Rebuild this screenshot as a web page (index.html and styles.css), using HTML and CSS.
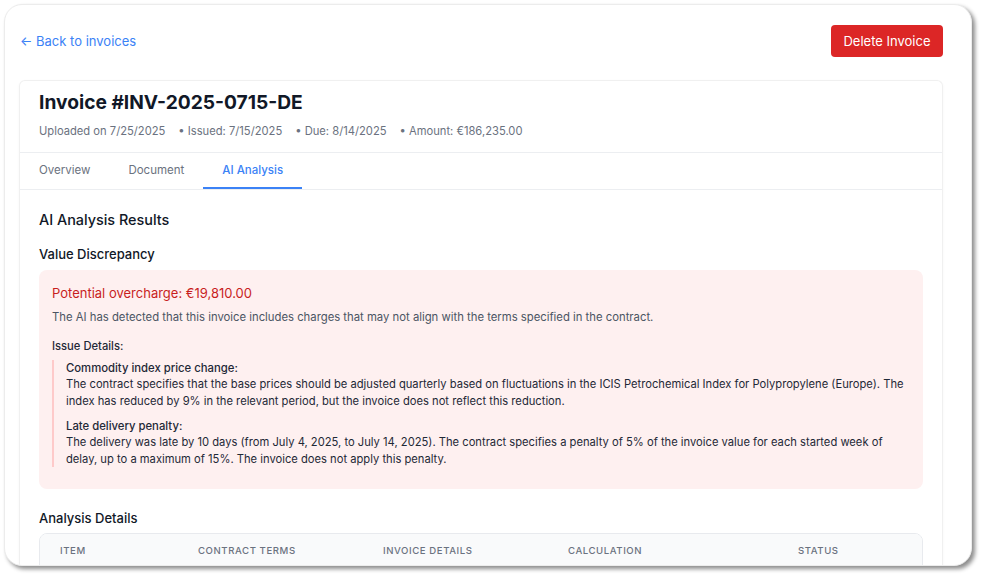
FILE: index.html
```html
<!DOCTYPE html>
<html lang="en">
<head>
<meta charset="utf-8">
<title>Invoice INV-2025-0715-DE</title>
<link rel="stylesheet" href="styles.css">
</head>
<body>
<div class="window">
  <div class="page">
    <div class="topbar">
      <a class="back" href="#">← Back to invoices</a>
      <button class="btn-delete">Delete Invoice</button>
    </div>
    <div class="card">
      <div class="card-head">
        <h1 class="title">Invoice #INV-2025-0715-DE</h1>
        <div class="meta">
          <span class="meta-item">Uploaded on 7/25/2025</span>
          <span class="meta-item">• Issued: 7/15/2025</span>
          <span class="meta-item">• Due: 8/14/2025</span>
          <span class="meta-item">• Amount: €186,235.00</span>
        </div>
      </div>
      <div class="tabs">
        <div class="tab">Overview</div>
        <div class="tab">Document</div>
        <div class="tab active">AI Analysis</div>
      </div>
      <div class="content">
        <h2 class="h-results">AI Analysis Results</h2>
        <h3 class="h-sub">Value Discrepancy</h3>
        <div class="alert">
          <div class="alert-title">Potential overcharge: €19,810.00</div>
          <p class="alert-desc">The AI has detected that this invoice includes charges that may not align with the terms specified in the contract.</p>
          <div class="issue-label">Issue Details:</div>
          <div class="issues">
            <div class="issue">
              <div class="issue-title">Commodity index price change:</div>
              <div class="issue-body">The contract specifies that the base prices should be adjusted quarterly based on fluctuations in the ICIS Petrochemical Index for Polypropylene (Europe). The index has reduced by 9% in the relevant period, but the invoice does not reflect this reduction.</div>
            </div>
            <div class="issue">
              <div class="issue-title">Late delivery penalty:</div>
              <div class="issue-body">The delivery was late by 10 days (from July 4, 2025, to July 14, 2025). The contract specifies a penalty of 5% of the invoice value for each started week of delay, up to a maximum of 15%. The invoice does not apply this penalty.</div>
            </div>
          </div>
        </div>
        <h3 class="h-sub h-details">Analysis Details</h3>
        <div class="table">
          <div class="thead">
            <div class="th">Item</div>
            <div class="th">Contract Terms</div>
            <div class="th">Invoice Details</div>
            <div class="th">Calculation</div>
            <div class="th">Status</div>
          </div>
          <div class="tbody"></div>
        </div>
      </div>
    </div>
  </div>
</div>
</body>
</html>
```
FILE: styles.css
```css
* { box-sizing: border-box; }
html, body { margin: 0; padding: 0; background: #ffffff; }
body {
  font-family: Inter, "Noto Sans", "Liberation Sans", sans-serif;
  color: #111827;
  width: 985px;
  height: 579px;
  overflow: hidden;
}
.window {
  margin: 4px 0 0 4px;
  width: 968px;
  height: 562px;
  background: #ffffff;
  border-radius: 18px;
  overflow: hidden;
  border: 1px solid #ececec;
  box-shadow: 3px 3px 4px rgba(0,0,0,0.45);
}
.page {
  padding: 20px 28px 0 14px;
}
.topbar {
  display: flex;
  justify-content: space-between;
  align-items: center;
  height: 32px;
}
.back {
  color: #3b82f6;
  text-decoration: none;
  font-size: 13px;
  padding-left: 1px;
}
.btn-delete {
  background: #dc2626;
  color: #ffffff;
  border: none;
  border-radius: 4px;
  height: 32px;
  width: 112px;
  font-family: inherit;
  font-size: 13px;
  padding: 0;
}
.card {
  margin-top: 23px;
  border: 1px solid #f0f0f0;
  border-bottom: none;
  border-radius: 6px 6px 0 0;
  box-shadow: 0 1px 3px rgba(0,0,0,0.04);
  height: 600px;
}
.card-head {
  padding: 7px 19px 13px;
}
.title {
  margin: 0;
  font-size: 19.2px;
  line-height: 28px;
  font-weight: 700;
  color: #111827;
}
.meta {
  display: flex;
  gap: 13px;
  margin-top: 7px;
  font-size: 11.2px;
  line-height: 16px;
  color: #6b7280;
}
.tabs {
  display: flex;
  border-top: 1px solid #eceef1;
  border-bottom: 1px solid #eceef1;
  height: 38px;
}
.tab {
  padding: 0 19px;
  font-size: 11.5px;
  line-height: 35px;
  color: #6b7280;
  border-bottom: 2px solid transparent;
}
.tab.active {
  color: #3b82f6;
  border-bottom-color: #3b82f6;
  font-weight: 500;
}
.content {
  padding: 18px 19px 0;
}
.h-results {
  margin: 0;
  font-size: 14.4px;
  line-height: 24px;
  font-weight: 500;
  color: #111827;
}
.h-sub {
  margin: 12px 0 6px;
  font-size: 13px;
  line-height: 20px;
  font-weight: 500;
  color: #111827;
}
.alert {
  background: #fef0f0;
  border-radius: 8px;
  padding: 13px 13px 22px;
}
.alert-title {
  font-size: 13px;
  line-height: 20px;
  color: #c81e1e;
}
.alert-desc {
  margin: 6px 0 0;
  font-size: 11.3px;
  line-height: 16px;
  color: #4b5563;
}
.issue-label {
  margin-top: 13px;
  font-size: 11.2px;
  line-height: 16px;
  font-weight: 500;
  color: #1f2937;
}
.issues {
  margin-top: 6px;
  border-left: 2px solid #fecaca;
  padding-left: 12px;
}
.issue + .issue { margin-top: 9px; }
.issue-title {
  font-size: 11.3px;
  line-height: 16px;
  font-weight: 500;
  color: #1f2937;
}
.issue-body {
  font-size: 11.2px;
  line-height: 16.5px;
  color: #1f2937;
}
.h-details {
  margin-top: 19px;
  margin-bottom: 5px;
}
.table {
  border: 1px solid #e8eaee;
  border-radius: 8px;
  overflow: hidden;
}
.thead {
  display: grid;
  grid-template-columns: 138px 185px 185px 230px 1fr;
  background: #f9fafb;
  height: 40px;
}
.th {
  padding: 9px 20px 8px;
  font-size: 9.6px;
  line-height: 16px;
  font-weight: 500;
  text-transform: uppercase;
  letter-spacing: 0.06em;
  color: #6b7280;
}
.tbody { height: 40px; }
```
